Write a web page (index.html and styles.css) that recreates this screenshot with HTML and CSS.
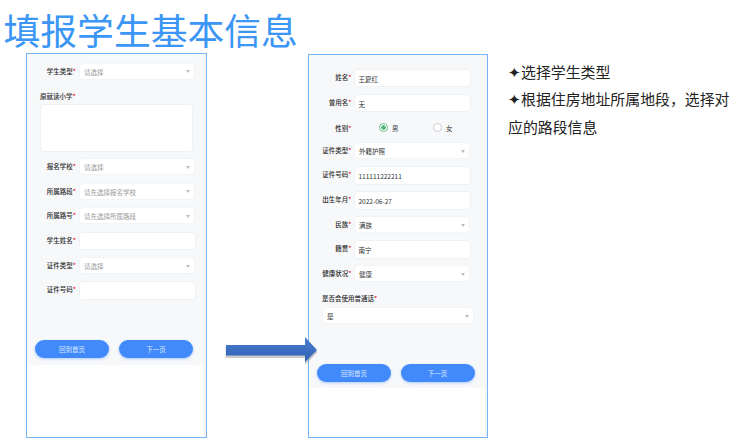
FILE: index.html
```html
<!DOCTYPE html>
<html lang="zh-CN">
<head>
<meta charset="utf-8">
<title>填报学生基本信息</title>
<link rel="stylesheet" href="styles.css">
</head>
<body>
<div class="slide">
  <h1 class="title">填报学生基本信息</h1>

  <section class="phone phone-left">
    <div class="sheet sheet-left">
      <div class="row"><label class="lab">学生类型<i>*</i></label><div class="field sel ph">请选择<b class="caret"></b></div></div>
      <label class="lab-top lab-school">原就读小学<i>*</i></label>
      <div class="area"></div>
      <div class="row gap-a"><label class="lab">报名学校<i>*</i></label><div class="field sel ph">请选择<b class="caret"></b></div></div>
      <div class="row gap-b"><label class="lab">所属路段<i>*</i></label><div class="field sel ph">请先选择报名学校<b class="caret"></b></div></div>
      <div class="row gap-b"><label class="lab">所属路号<i>*</i></label><div class="field sel ph">请先选择所属路段<b class="caret"></b></div></div>
      <div class="row gap-b"><label class="lab">学生姓名<i>*</i></label><div class="field inp"></div></div>
      <div class="row gap-c"><label class="lab">证件类型<i>*</i></label><div class="field sel ph">请选择<b class="caret"></b></div></div>
      <div class="row gap-c"><label class="lab">证件号码<i>*</i></label><div class="field inp"></div></div>
      <div class="btns btns-left"><button class="btn">回到首页</button><button class="btn">下一页</button></div>
    </div>
  </section>

  <section class="phone phone-right">
    <div class="sheet sheet-right">
      <div class="row"><label class="lab">姓名<i>*</i></label><div class="field inp val">王夏红</div></div>
      <div class="row gap-c"><label class="lab">曾用名<i>*</i></label><div class="field inp val">无</div></div>
      <div class="row radios"><label class="lab">性别<i>*</i></label>
        <div class="radio-set">
          <span class="radio"><span class="dot on"></span>男</span>
          <span class="radio"><span class="dot"></span>女</span>
        </div>
      </div>
      <div class="row gap-d"><label class="lab">证件类型<i>*</i></label><div class="field sel val">外籍护照<b class="caret"></b></div></div>
      <div class="row gap-b"><label class="lab">证件号码<i>*</i></label><div class="field inp val">111111222211</div></div>
      <div class="row gap-c"><label class="lab">出生年月<i>*</i></label><div class="field inp val">2022-06-27</div></div>
      <div class="row gap-c"><label class="lab">民族<i>*</i></label><div class="field sel val">满族<b class="caret"></b></div></div>
      <div class="row gap-b"><label class="lab">籍贯<i>*</i></label><div class="field inp val">南宁</div></div>
      <div class="row gap-c"><label class="lab">健康状况<i>*</i></label><div class="field sel val">健康<b class="caret"></b></div></div>
      <label class="lab-top lab-mandarin">是否会使用普通话<i>*</i></label>
      <div class="field sel val wide">是<b class="caret"></b></div>
      <div class="btns btns-right"><button class="btn">回到首页</button><button class="btn">下一页</button></div>
    </div>
  </section>

  <svg class="arrow" width="96" height="32" viewBox="0 0 96 32" aria-hidden="true">
    <defs>
      <linearGradient id="ag" x1="0" y1="0" x2="0" y2="1"><stop offset="0" stop-color="#4a7cd0"/><stop offset="1" stop-color="#2f62b4"/></linearGradient>
    </defs>
    <path d="M1 11H80.500V4L93 16L80.500 29V22H1Z" fill="#8a8a8a" opacity=".45" transform="translate(-.5 1)"/>
    <path d="M1 10H80V2L92 15L80 27V20.500H1Z" fill="url(#ag)"/>
  </svg>

  <div class="notes">
    <p>✦选择学生类型</p>
    <p>✦根据住房地址所属地段，选择对应的路段信息</p>
  </div>
</div>
</body>
</html>
```

FILE: styles.css
```css
* { box-sizing: border-box; }
html, body { margin: 0; padding: 0; background: #fff; }
body { font-family: "Noto Sans CJK SC", "Liberation Sans", sans-serif; }
.slide { position: relative; width: 737px; height: 447px; overflow: hidden; }

.title {
  position: absolute; left: 3.500px; top: 5px; margin: 0;
  font-size: 36.800px; line-height: 48px; font-weight: 400;
  color: #3b96f5; white-space: nowrap;
}

.phone {
  position: absolute; width: 181px; height: 385px;
  border: 1px solid #76b5f8; background: #fff;
  box-shadow: inset -2px 0 0 #f3f4f5;
}
.phone-left { left: 26px; top: 53px; }
.phone-right { left: 308px; top: 54px; width: 180px; height: 384px; }

.sheet { background: #f7f8fa; margin-right: 2px; display: flow-root; }
.sheet-left { height: 311px; padding-top: 8.500px; }
.sheet-right { height: 333px; padding-top: 13.500px; }

.row { display: flex; align-items: flex-start; }
.lab {
  flex: none; width: 52px; padding: 3px 3px 0 0; text-align: right;
  font-size: 6.500px; line-height: 10px; font-weight: 500; color: #2a2a2a;
}
.sheet-right .lab { width: 45px; padding-right: 2.500px; }
.lab i, .lab-top i { color: #e8232a; font-style: normal; }

.field {
  position: relative; background: #fff; border: 1px solid #f0f1f3; border-radius: 4px;
  font-size: 6.500px; line-height: 10px; color: #333;
}
.sel { width: 116px; height: 17px; padding: 3px 0 0 4px; border-color: #f3f4f6; }
.inp { width: 117px; height: 18.500px; padding: 4px 0 0 3.500px; }
.ph { color: #999; }
.wide { width: 152px; margin-left: 13px; }

.caret {
  position: absolute; right: 4.500px; top: 6.500px; width: 0; height: 0;
  border-left: 2.500px solid transparent; border-right: 2.500px solid transparent;
  border-top: 3px solid #b9bcc2;
}

.lab-top {
  display: block; font-size: 6.500px; line-height: 10px; font-weight: 500; color: #2a2a2a;
}
.lab-school { margin: 11px 0 3.500px 13px; }
.lab-mandarin { margin: 11px 0 4px 13px; }

.area {
  width: 153px; height: 47.500px; margin-left: 13px;
  background: #fff; border: 1px solid #f0f1f3; border-radius: 4px;
}

.gap-a { margin-top: 6.500px; }
.gap-b { margin-top: 7px; }
.gap-c { margin-top: 6.500px; }
.gap-d { margin-top: 8.500px; }
.sheet-left .gap-b { margin-top: 7.500px; }
.sheet-left .gap-c { margin-top: 7px; }
.radios { margin-top: 10.500px; height: 11px; }
.radios .lab { padding-top: 0; }
.radio-set { display: flex; margin-left: 25px; gap: 32px; }
.radio {
  display: flex; align-items: center; gap: 4px; width: 22px;
  font-size: 6.500px; line-height: 10px; color: #333;
}
.dot {
  flex: none; width: 9px; height: 9px; border-radius: 50%;
  border: 1px solid #c9cbcf; background: #fff;
}
.dot.on { border-color: #6cc08a; background: radial-gradient(circle, #55b679 0 2px, #fff 2.500px); }

.btns { display: flex; gap: 10px; }
.btns-left { margin: 40.500px 0 0 8px; }
.btns-right { margin: 40px 0 0 8px; gap: 9.500px; }
.btn {
  width: 74px; height: 18px; padding: 0; border: 0; border-radius: 9px;
  background: #4289fb; color: #dce9ff; box-shadow: 0 1px 3px rgba(66, 137, 251, .4);
  font: 6.500px/18px "Noto Sans CJK SC", sans-serif;
}

.arrow { position: absolute; left: 225px; top: 335px; }

.notes {
  position: absolute; left: 508px; top: 57.500px; width: 226px;
  font-size: 14.900px; line-height: 27.500px; color: #222;
}
.notes p { margin: 0; }
```
